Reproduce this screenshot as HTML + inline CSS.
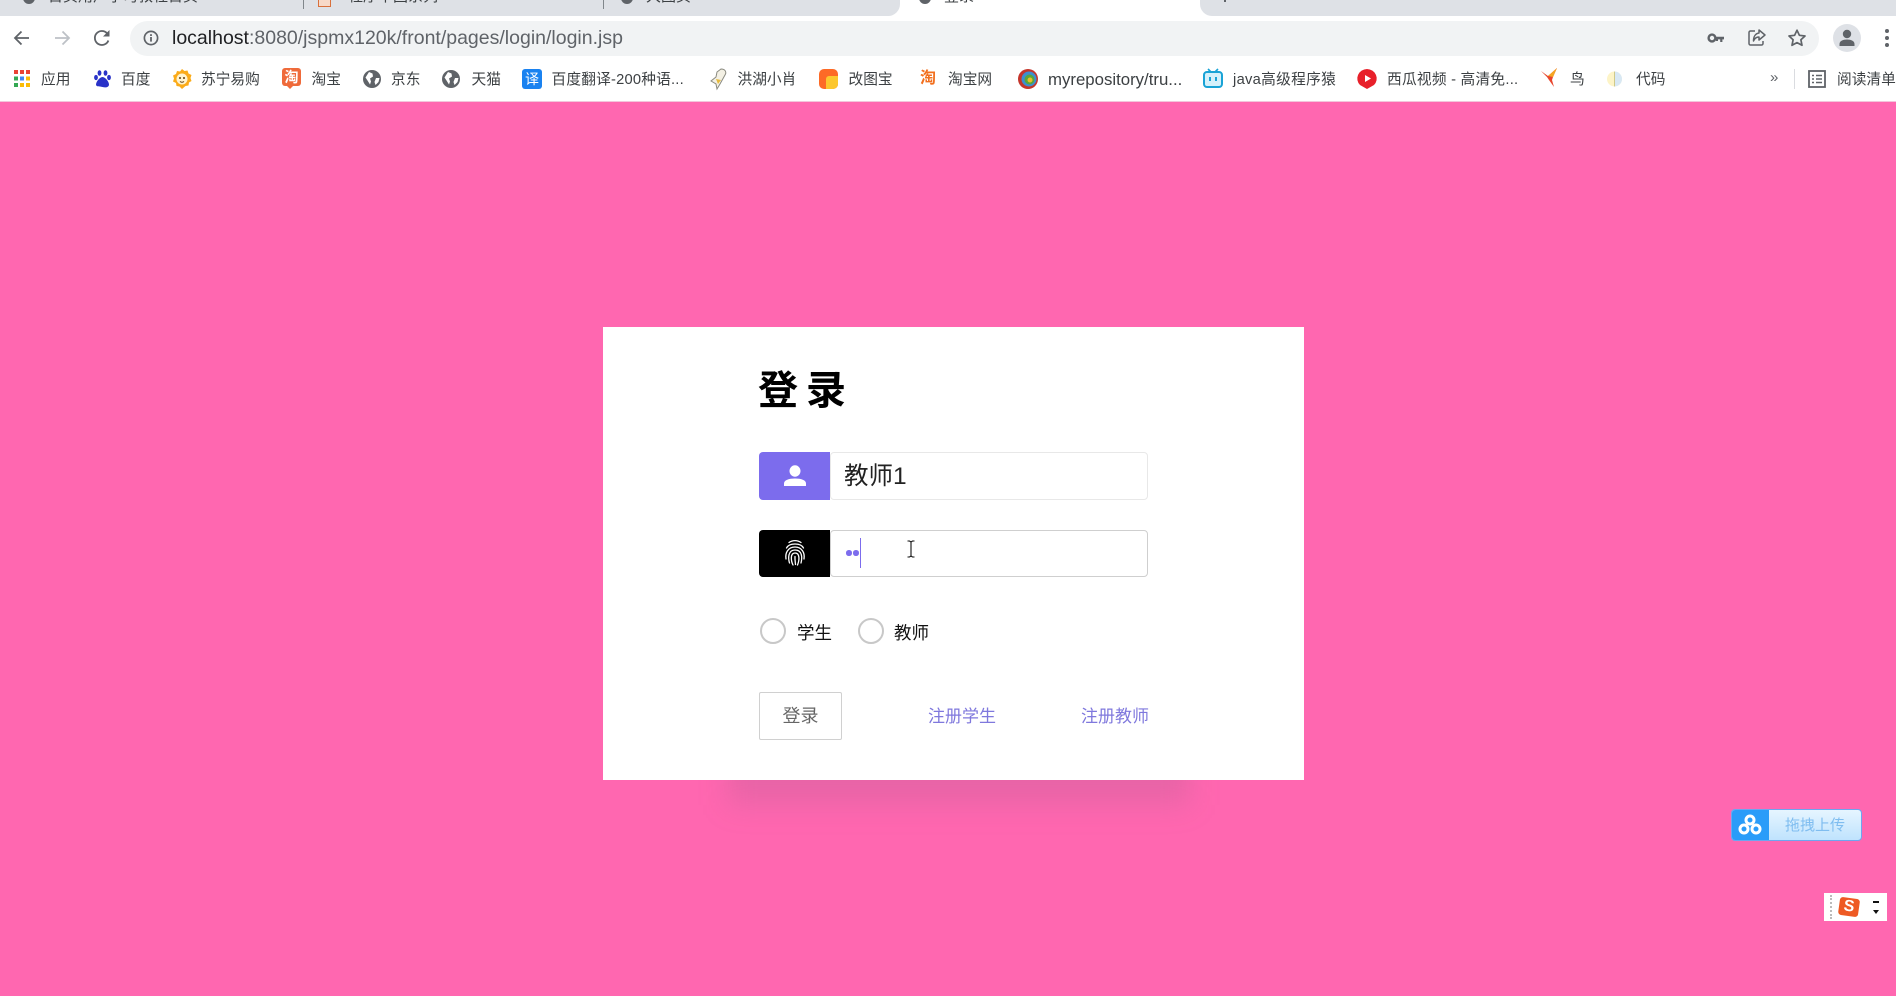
<!DOCTYPE html>
<html lang="zh-CN">
<head>
<meta charset="utf-8">
<title>登录</title>
<style>
html,body{margin:0;padding:0;width:1896px;height:996px;overflow:hidden;background:#ff67b0;font-family:"Liberation Sans","Noto Sans CJK SC",sans-serif;}
.a{position:absolute;white-space:nowrap;}
#chrome{position:absolute;left:0;top:0;width:1896px;height:101px;background:#fff;border-bottom:1px solid #f3c6dc;overflow:hidden;}
.tab{position:absolute;top:-12px;font-size:15px;line-height:18px;color:#3c4043;white-space:nowrap;}
.bm{position:absolute;top:70px;height:20px;line-height:20px;font-size:14.7px;color:#3c4043;white-space:nowrap;}
svg{position:absolute;overflow:visible;}
.lbl{position:absolute;font-size:17.5px;line-height:24px;color:#111;white-space:nowrap;}
.radio{position:absolute;box-sizing:border-box;width:26px;height:26px;border:2px solid #c8c8c8;border-radius:50%;background:#fff;}
.lnk{position:absolute;font-size:17px;line-height:24px;color:#7f78dd;white-space:nowrap;}
</style>
</head>
<body>
<div id="chrome">
  <div class="a" style="left:0;top:0;width:1896px;height:16px;background:#dee1e6"></div>
  <div class="a" style="left:900px;top:0;width:300px;height:16px;background:#fff"></div>
  <div class="a" style="left:888px;top:0;width:12px;height:16px;background:#fff"></div>
  <div class="a" style="left:888px;top:0;width:12px;height:16px;background:#dee1e6;border-bottom-right-radius:12px"></div>
  <div class="a" style="left:1200px;top:0;width:12px;height:16px;background:#fff"></div>
  <div class="a" style="left:1200px;top:0;width:12px;height:16px;background:#dee1e6;border-bottom-left-radius:12px"></div>
  <div class="a" style="left:303px;top:0;width:1px;height:9px;background:#80868b"></div>
  <div class="a" style="left:603px;top:0;width:1px;height:9px;background:#80868b"></div>
  <div class="a" style="left:23px;top:-8px;width:12px;height:12px;border-radius:50%;background:#5f6368"></div>
  <div class="tab" style="left:48px">首页用户学习教程首页</div>
  <div class="a" style="left:318px;top:-7px;width:13px;height:14px;background:#f7d9c8;border:1px solid #d8703c;box-sizing:border-box"></div>
  <div class="tab" style="left:348px">程序中国系列</div>
  <div class="a" style="left:621px;top:-8px;width:12px;height:12px;border-radius:50%;background:#5f6368"></div>
  <div class="tab" style="left:646px">大图页</div>
  <div class="a" style="left:919px;top:-8px;width:12px;height:12px;border-radius:50%;background:#5f6368"></div>
  <div class="tab" style="left:944px">登录</div>
  <div class="a" style="left:1224px;top:0;width:2px;height:2px;background:#5f6368"></div>

  <div class="a" style="left:130px;top:21px;width:1689px;height:35px;background:#f1f3f4;border-radius:18px"></div>

  <svg style="left:12px;top:28px" width="20" height="20" viewBox="0 0 20 20"><path d="M17 10H3.500M9.500 3.500L3 10l6.500 6.500" fill="none" stroke="#5f6368" stroke-width="1.800"/></svg>
  <svg style="left:52px;top:28px" width="20" height="20" viewBox="0 0 20 20"><path d="M3 10h13.500M10.500 3.500L17 10l-6.500 6.500" fill="none" stroke="#bdc1c6" stroke-width="1.800"/></svg>
  <svg style="left:92px;top:28px" width="20" height="20" viewBox="0 0 20 20"><path d="M16.400 12.500A7 7 0 1 1 15 5.200" fill="none" stroke="#5f6368" stroke-width="1.800"/><path d="M17.500 2v6.500H11z" fill="#5f6368"/></svg>
  <svg style="left:143px;top:30px" width="16" height="16" viewBox="0 0 16 16"><circle cx="8" cy="8" r="6.600" fill="none" stroke="#5f6368" stroke-width="1.700"/><rect x="7.100" y="7" width="1.800" height="4.600" fill="#5f6368"/><rect x="7.100" y="4.200" width="1.800" height="1.800" fill="#5f6368"/></svg>

  <div class="a" style="left:172px;top:26px;font-size:19.5px;line-height:24px;color:#5f6368"><span style="color:#202124">localhost</span>:8080/jspmx120k/front/pages/login/login.jsp</div>

  <svg style="left:1707px;top:31px" width="18" height="14" viewBox="0 0 18 14"><circle cx="5" cy="7" r="3.400" fill="none" stroke="#5f6368" stroke-width="2.400"/><path d="M8 5.800h9v2.600h-1.600V11h-2.200V8.400H11V10H9V8.400H8z" fill="#5f6368"/></svg>
  <svg style="left:1747px;top:28px" width="20" height="20" viewBox="0 0 20 20"><path d="M8 3H3.500A1.500 1.500 0 0 0 2 4.500v11A1.500 1.500 0 0 0 3.500 17h11a1.500 1.500 0 0 0 1.500-1.500V13" fill="none" stroke="#5f6368" stroke-width="1.500"/><path d="M12 2l6 5-6 5V9C9 9 7.500 10.500 6.500 13c0-4.500 2-7.500 5.500-8z" fill="none" stroke="#5f6368" stroke-width="1.500" stroke-linejoin="round"/></svg>
  <svg style="left:1787px;top:28px" width="20" height="20" viewBox="0 0 20 20"><path d="M10 2.200l2.400 5.100 5.600.7-4.100 3.800 1.100 5.500L10 14.600l-5 2.700 1.100-5.500L2 8l5.600-.7z" fill="none" stroke="#5f6368" stroke-width="1.700" stroke-linejoin="round"/></svg>
  <div class="a" style="left:1833px;top:24px;width:28px;height:28px;border-radius:50%;background:#dee1e6"></div>
  <svg style="left:1838px;top:29px" width="18" height="18" viewBox="0 0 18 18"><circle cx="9" cy="5" r="4.200" fill="#5f6368"/><path d="M1.500 17v-2c0-3 3.500-4.500 7.500-4.500s7.500 1.500 7.500 4.500v2z" fill="#5f6368"/></svg>
  <div class="a" style="left:1884.500px;top:29px;width:4px;height:4px;border-radius:50%;background:#5f6368"></div>
  <div class="a" style="left:1884.500px;top:36px;width:4px;height:4px;border-radius:50%;background:#5f6368"></div>
  <div class="a" style="left:1884.500px;top:43px;width:4px;height:4px;border-radius:50%;background:#5f6368"></div>

  <!-- bookmarks -->
  <svg style="left:13px;top:70px" width="18" height="18" viewBox="0 0 18 18">
    <rect x="1" y="0" width="4" height="4" fill="#ea4335"/><rect x="7" y="0" width="4" height="4" fill="#ea4335"/><rect x="13" y="0" width="4" height="4" fill="#ea4335"/>
    <rect x="1" y="6.500" width="4" height="4" fill="#34a853"/><rect x="7" y="6.500" width="4" height="4" fill="#4285f4"/><rect x="13" y="6.500" width="4" height="4" fill="#fbbc05"/>
    <rect x="1" y="13" width="4" height="4" fill="#34a853"/><rect x="7" y="13" width="4" height="4" fill="#fbbc05"/><rect x="13" y="13" width="4" height="4" fill="#fbbc05"/>
  </svg>
  <div class="bm" style="left:41px">应用</div>

  <svg style="left:94px;top:70px" width="17" height="18" viewBox="0 0 17 18" fill="#2932c8"><ellipse cx="5.500" cy="3" rx="1.900" ry="2.800"/><ellipse cx="11.500" cy="3" rx="1.900" ry="2.800"/><ellipse cx="2" cy="7.500" rx="1.900" ry="2.600"/><ellipse cx="15" cy="7.500" rx="1.900" ry="2.600"/><path d="M8.500 7c3 0 6.500 5 6.500 7.500S12 18 8.500 17 2 17 2 14.500 5.500 7 8.500 7z"/></svg>
  <div class="bm" style="left:121px">百度</div>

  <svg style="left:172px;top:69px" width="20" height="20" viewBox="0 0 20 20"><path d="M10 0l2.500 2 3-.5 1 3 3 1.500-1 3 1 3-2.500 1.500-.5 3-3 .5L10 20l-2.500-2.500-3-.5-.5-3L1 12.500l1-3-1-3 3-1.500 1-3 3 .5z" fill="#fbab18"/><circle cx="10" cy="10" r="5.500" fill="#fff3cf"/><circle cx="8" cy="9" r="1" fill="#5a3b10"/><circle cx="12" cy="9" r="1" fill="#5a3b10"/><path d="M8 12.500q2 1.500 4 0" stroke="#5a3b10" fill="none"/></svg>
  <div class="bm" style="left:201px">苏宁易购</div>

  <div class="a" style="left:282px;top:68px;width:19px;height:18px;background:#ef6a3a;border-radius:3px;color:#fff;font-size:14px;line-height:18px;text-align:center;font-weight:700">淘</div>
  <div class="a" style="left:287px;top:86px;border-top:3px solid #ef6a3a;border-left:3px solid transparent;border-right:3px solid transparent"></div>
  <div class="bm" style="left:311.500px">淘宝</div>

  <svg style="left:363px;top:70px" width="18" height="18" viewBox="0 0 18 18"><circle cx="9" cy="9" r="9" fill="#5f6368"/><path d="M6 2l3.500 1.500.5 3-3 2 1 3-1 3-2.500-4-2-3zM13 8l3.500 0-1 4-3 3-1-3z" fill="#fff"/></svg>
  <div class="bm" style="left:391px">京东</div>

  <svg style="left:442px;top:70px" width="18" height="18" viewBox="0 0 18 18"><circle cx="9" cy="9" r="9" fill="#5f6368"/><path d="M6 2l3.500 1.500.5 3-3 2 1 3-1 3-2.500-4-2-3zM13 8l3.500 0-1 4-3 3-1-3z" fill="#fff"/></svg>
  <div class="bm" style="left:471.500px">天猫</div>

  <div class="a" style="left:522px;top:69px;width:20px;height:20px;background:#1a82f0;border-radius:3px;color:#fff;font-size:14px;line-height:20px;text-align:center">译</div>
  <div class="bm" style="left:551.500px;letter-spacing:.2px">百度翻译-200种语...</div>

  <svg style="left:708px;top:68px" width="21" height="22" viewBox="0 0 21 22"><path d="M13 1c4 0 6 3 4 6l-5 9-3 5-1-5-5-3 5-4 1-5z" fill="#f3f0e4" stroke="#8a8a80"/><path d="M8 11l5 1-3 4z" fill="#e6b93c"/></svg>
  <div class="bm" style="left:737.500px">洪湖小肖</div>

  <div class="a" style="left:819px;top:69px;width:19px;height:20px;background:#fd6a26;border-radius:5px"></div>
  <div class="a" style="left:826px;top:76px;width:12px;height:13px;background:#fcc72e;border-radius:3px 0 5px 0"></div>
  <div class="bm" style="left:848.500px">改图宝</div>

  <div class="a" style="left:919px;top:69px;width:18px;height:20px;color:#f2701f;font-size:16px;line-height:20px;font-weight:700;text-align:center">淘</div>
  <div class="bm" style="left:948px">淘宝网</div>

  <svg style="left:1018px;top:69px" width="20" height="20" viewBox="0 0 20 20"><circle cx="10" cy="10" r="10" fill="#c4352b"/><circle cx="11" cy="10" r="7.500" fill="#3d8fd0"/><circle cx="11.500" cy="10.500" r="5" fill="#5aa63a"/><circle cx="12" cy="11" r="2.500" fill="#e8c02a"/></svg>
  <div class="bm" style="left:1048px;font-size:16.8px">myrepository/tru...</div>

  <svg style="left:1203px;top:68px" width="20" height="20" viewBox="0 0 20 20"><path d="M5 1l3 3M15 1l-3 3" stroke="#19a3d6" stroke-width="1.600"/><rect x="1" y="4" width="18" height="15" rx="3" fill="#d5f1fb" stroke="#19a3d6" stroke-width="2"/><rect x="6" y="9" width="2" height="4" fill="#19a3d6"/><rect x="12" y="9" width="2" height="4" fill="#19a3d6"/></svg>
  <div class="bm" style="left:1233px;letter-spacing:.3px">java高级程序猿</div>

  <svg style="left:1357px;top:69px" width="20" height="20" viewBox="0 0 20 20"><path d="M10 0a10 9.500 0 0 1 7 16l-7 4-7-4A10 9.500 0 0 1 10 0z" fill="#e8202a"/><path d="M8 6l6 3.500L8 13z" fill="#fff"/></svg>
  <div class="bm" style="left:1387px;letter-spacing:.25px">西瓜视频 - 高清免...</div>

  <svg style="left:1540px;top:68px" width="20" height="21" viewBox="0 0 20 21"><path d="M1 3l7 5 9-8-4 9-1 3 2 7-5-7-2-3z" fill="#e8452c"/><path d="M8 8l9-8-4 9z" fill="#f5a623"/></svg>
  <div class="bm" style="left:1570px">鸟</div>

  <svg style="left:1606px;top:70px" width="17" height="18" viewBox="0 0 17 18"><circle cx="8.500" cy="9" r="7.500" fill="#fdf4c7"/><path d="M8.500 1.500a7.500 7.500 0 0 1 0 15z" fill="#d8e8f4"/><path d="M8.500 1.500v15" stroke="#cfc98a"/></svg>
  <div class="bm" style="left:1636px">代码</div>

  <div class="a" style="left:1770px;top:68px;font-size:15px;line-height:20px;color:#5f6368">»</div>
  <div class="a" style="left:1794px;top:69px;width:1px;height:20px;background:#dadce0"></div>
  <svg style="left:1808px;top:70px" width="18" height="18" viewBox="0 0 18 18"><rect x="1" y="1" width="16" height="16" fill="none" stroke="#5f6368" stroke-width="1.800"/><path d="M4 5.500h2M8 5.500h6M4 9h2M8 9h6M4 12.500h2M8 12.500h6" stroke="#5f6368" stroke-width="1.500"/></svg>
  <div class="bm" style="left:1837px">阅读清单</div>
</div>

<!-- shadow -->
<div class="a" style="left:728px;top:735px;width:462px;height:70px;background:rgba(140,90,130,.2);filter:blur(14px)"></div>

<!-- card -->
<div class="a" style="left:603px;top:327px;width:701px;height:453px;background:#fff"></div>

<div class="a" style="left:758px;top:363px;font-size:40px;line-height:56px;font-weight:700;letter-spacing:8px;color:#000">登录</div>

<!-- username -->
<div class="a" style="left:759px;top:452px;width:71px;height:48px;background:#7c6ced;border-radius:4px 0 0 4px"></div>
<svg style="left:784px;top:465px" width="22" height="22" viewBox="0 0 22 22"><ellipse cx="11" cy="6" rx="5.500" ry="5.700" fill="#fff"/><path d="M0 21v-2.500C0 15 5 13.500 11 13.500s11 1.500 11 5V21z" fill="#fff"/></svg>
<div class="a" style="left:830px;top:452px;width:318px;height:48px;box-sizing:border-box;border:1.5px solid #e8e8e8;border-radius:4px;background:#fff"></div>
<div class="a" style="left:844px;top:459px;font-size:24.500px;line-height:36px;color:#222">教师1</div>

<!-- password -->
<div class="a" style="left:759px;top:530px;width:71px;height:47px;background:#000;border-radius:4px 0 0 4px"></div>
<svg style="left:783px;top:539px" width="24" height="28" viewBox="0 0 24 28" fill="none" stroke="#fff" stroke-linecap="round">
  <path d="M6 3.500C9.500 1 14.500 1 18 3.500" stroke-width="1.300"/>
  <path d="M3.500 9C5 6 8 5 12 5s7 1 8.500 4" stroke-width="1.300"/>
  <path d="M3 20c-1-6 2-12 9-12s10 6 9 12" stroke-width="1.300"/>
  <path d="M6.500 24C5 19 5 11 12 11s7.500 7 6 13" stroke-width="1.300"/>
  <path d="M10 26c-2-4-3-12 2-12s4.500 7 2.500 12" stroke-width="1.300"/>
  <path d="M12 17.500c-.2 3 .3 5.500 .5 8" stroke-width="1.300"/>
</svg>
<div class="a" style="left:830px;top:530px;width:318px;height:47px;box-sizing:border-box;border:1.5px solid #cfcfcf;border-radius:4px;background:#fff"></div>
<div class="a" style="left:846px;top:550px;width:5.500px;height:5.500px;border-radius:50%;background:#7c6ced"></div>
<div class="a" style="left:853px;top:550px;width:5.500px;height:5.500px;border-radius:50%;background:#7c6ced"></div>
<div class="a" style="left:860px;top:538px;width:1px;height:30px;background:#7c6ced"></div>
<svg style="left:906px;top:540px" width="10" height="18" viewBox="0 0 10 18"><path d="M1.500 1h2l1.500 1 1.500-1h2M5 2v14M1.500 17h2l1.500-1 1.500 1h2" fill="none" stroke="#111" stroke-width="1.100"/></svg>

<!-- radios -->
<div class="radio" style="left:760px;top:618px"></div>
<div class="lbl" style="left:797px;top:621px">学生</div>
<div class="radio" style="left:858px;top:618px"></div>
<div class="lbl" style="left:894px;top:621px">教师</div>

<!-- actions -->
<div class="a" style="left:759px;top:692px;width:83px;height:48px;box-sizing:border-box;border:1.500px solid #d0d0d0;border-radius:2px;background:#fff;color:#666;font-size:18px;line-height:46px;text-align:center">登录</div>
<div class="lnk" style="left:928px;top:705px">注册学生</div>
<div class="lnk" style="left:1081px;top:705px">注册教师</div>

<!-- baidu upload -->
<div class="a" style="left:1731px;top:809px;width:131px;height:32px;box-sizing:border-box;border:1px solid #6ea5ef;border-radius:4px;background:linear-gradient(180deg,#e6f5ff,#bfe3fe);overflow:hidden">
  <div class="a" style="left:0;top:0;width:37px;height:30px;background:#2a9cf9"></div>
  <div class="a" style="left:53px;top:6px;font-size:15px;line-height:20px;color:#7fbdf0">拖拽上传</div>
</div>
<svg style="left:1738px;top:814px" width="24" height="22" viewBox="0 0 24 22" fill="none" stroke="#fff" stroke-width="3"><circle cx="12" cy="6" r="4"/><circle cx="6" cy="15" r="4"/><circle cx="18" cy="15" r="4"/></svg>

<!-- sogou -->
<div class="a" style="left:1824px;top:893px;width:63px;height:28px;background:#fff"></div>
<div class="a" style="left:1830px;top:895px;width:0;height:24px;border-left:2px dotted #bbb"></div>
<div class="a" style="left:1839px;top:898px;width:20px;height:18px;background:#ee5a24;border-radius:3px;color:#fff;font-size:16px;line-height:18px;font-weight:700;text-align:center;transform:rotate(8deg)">S</div>
<div class="a" style="left:1873px;top:901px;width:6px;height:2px;background:#111"></div>
<div class="a" style="left:1873px;top:910px;border-top:4px solid #111;border-left:3.500px solid transparent;border-right:3.500px solid transparent"></div>
</body>
</html>
